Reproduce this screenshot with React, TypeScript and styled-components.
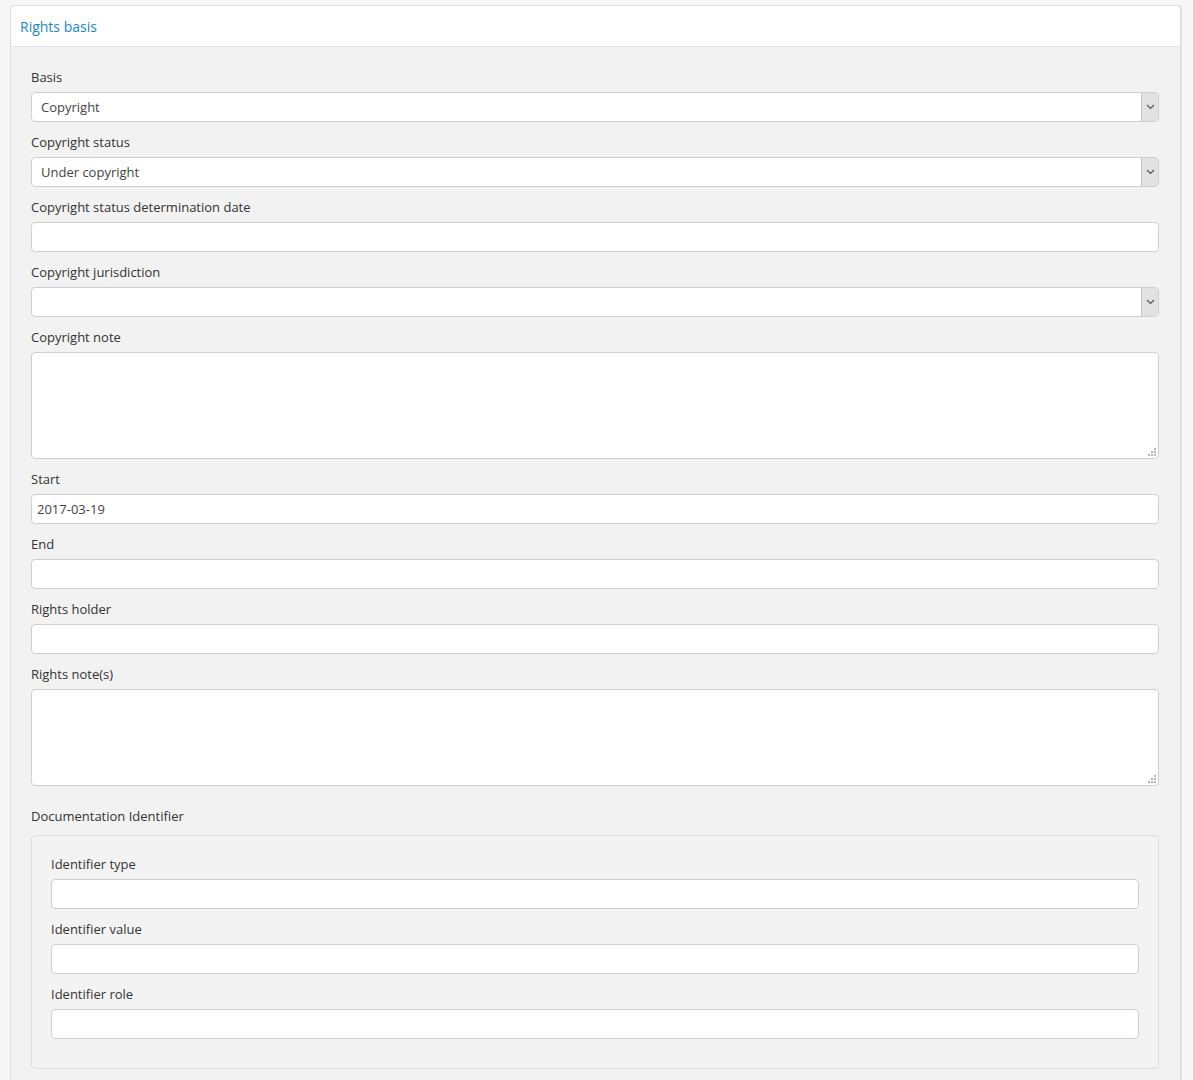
import * as React from "react";
import styled, { createGlobalStyle } from "styled-components";

const GlobalStyle = createGlobalStyle`
  html, body {
    margin: 0;
    padding: 0;
    background: #f7f7f7;
    font-family: "Open Sans", "Liberation Sans", sans-serif;
    font-size: 13px;
    color: #333;
  }
`;

const Page = styled.div`
  padding: 5px 12px 0 10px;
`;

const Panel = styled.div`
  background: #f2f2f2;
  border: 1px solid #dcdcdc;
  border-bottom: none;
  border-radius: 4px 4px 0 0;
  box-shadow: 1px 0 0 #e6e6e6;
`;

const PanelHeader = styled.div`
  height: 40px;
  display: flex;
  align-items: center;
  padding: 0 9px;
  background: #fff;
  border-bottom: 1px solid #e3e3e3;
  border-radius: 4px 4px 0 0;
`;

const PanelTitle = styled.h3`
  margin: 0;
  font-size: 14px;
  font-weight: 400;
  color: #1c86c8;
  line-height: 20px;
  padding-top: 1px;
`;

const PanelBody = styled.div`
  padding: 20px 21px 12px 20px;
`;

const Group = styled.div<{ $gap?: number }>`
  margin-bottom: ${p => p.$gap ?? 10}px;
`;

const Label = styled.label`
  display: block;
  line-height: 20px;
  margin-bottom: 5px;
  color: #333;
`;

const TextInput = styled.input`
  display: block;
  box-sizing: border-box;
  width: 100%;
  height: 30px;
  padding: 0 5px;
  border: 1px solid #cfcfcf;
  border-radius: 4px;
  background: #fff;
  font: inherit;
  color: #444;
  outline: none;
`;

const SelectBox = styled.div`
  display: flex;
  box-sizing: border-box;
  height: 30px;
  border: 1px solid #cfcfcf;
  border-radius: 4px;
  background: #fff;
  overflow: hidden;
`;

const SelectValue = styled.div`
  flex: 1;
  display: flex;
  align-items: center;
  padding: 0 9px;
  color: #444;
`;

const SelectArrow = styled.div`
  width: 16px;
  display: flex;
  align-items: center;
  justify-content: center;
  background: #e2e2e2;
  border-left: 1px solid #c4c4c4;
`;

const AreaWrap = styled.div`
  position: relative;
`;

const TextArea = styled.textarea<{ $h: number }>`
  display: block;
  box-sizing: border-box;
  width: 100%;
  height: ${p => p.$h}px;
  border: 1px solid #cfcfcf;
  border-radius: 4px;
  background: #fff;
  resize: none;
  font: inherit;
  outline: none;
`;

const Grip = styled.svg`
  position: absolute;
  right: 3px;
  bottom: 3px;
`;

const Fieldset = styled.div`
  margin-top: 9px;
  padding: 18px 19px 19px 19px;
  border: 1px solid #dedede;
  border-radius: 4px;
  background: #f3f3f3;
`;

const Chevron = () => (
  <svg width="9" height="6" viewBox="0 0 9 6">
    <path d="M1 1 L4.5 4.5 L8 1" fill="none" stroke="#555" strokeWidth="1.2" />
  </svg>
);

const ResizeGrip = () => (
  <Grip width="8" height="8" viewBox="0 0 8 8">
    {[
      [6, 0],
      [3, 3],
      [6, 3],
      [0, 6],
      [3, 6],
      [6, 6],
    ].map(([x, y], i) => (
      <rect key={i} x={x} y={y} width="2" height="2" fill="#b4b4b4" />
    ))}
  </Grip>
);

const Select = ({ value }: { value?: string }) => (
  <SelectBox>
    <SelectValue>{value}</SelectValue>
    <SelectArrow>
      <Chevron />
    </SelectArrow>
  </SelectBox>
);

const Area = ({ h }: { h: number }) => (
  <AreaWrap>
    <TextArea $h={h} />
    <ResizeGrip />
  </AreaWrap>
);

export default function App() {
  return (
    <Page>
      <GlobalStyle />
      <Panel>
        <PanelHeader>
          <PanelTitle>Rights basis</PanelTitle>
        </PanelHeader>
        <PanelBody>
          <Group>
            <Label>Basis</Label>
            <Select value="Copyright" />
          </Group>
          <Group>
            <Label>Copyright status</Label>
            <Select value="Under copyright" />
          </Group>
          <Group>
            <Label>Copyright status determination date</Label>
            <TextInput />
          </Group>
          <Group>
            <Label>Copyright jurisdiction</Label>
            <Select />
          </Group>
          <Group>
            <Label>Copyright note</Label>
            <Area h={107} />
          </Group>
          <Group>
            <Label>Start</Label>
            <TextInput defaultValue="2017-03-19" />
          </Group>
          <Group>
            <Label>End</Label>
            <TextInput />
          </Group>
          <Group>
            <Label>Rights holder</Label>
            <TextInput />
          </Group>
          <Group $gap={20}>
            <Label>Rights note(s)</Label>
            <Area h={97} />
          </Group>
          <Group>
            <Label as="div" style={{ marginBottom: 0 }}>
              Documentation Identifier
            </Label>
            <Fieldset>
              <Group>
                <Label>Identifier type</Label>
                <TextInput />
              </Group>
              <Group>
                <Label>Identifier value</Label>
                <TextInput />
              </Group>
              <Group>
                <Label>Identifier role</Label>
                <TextInput />
              </Group>
            </Fieldset>
          </Group>
        </PanelBody>
      </Panel>
    </Page>
  );
}
